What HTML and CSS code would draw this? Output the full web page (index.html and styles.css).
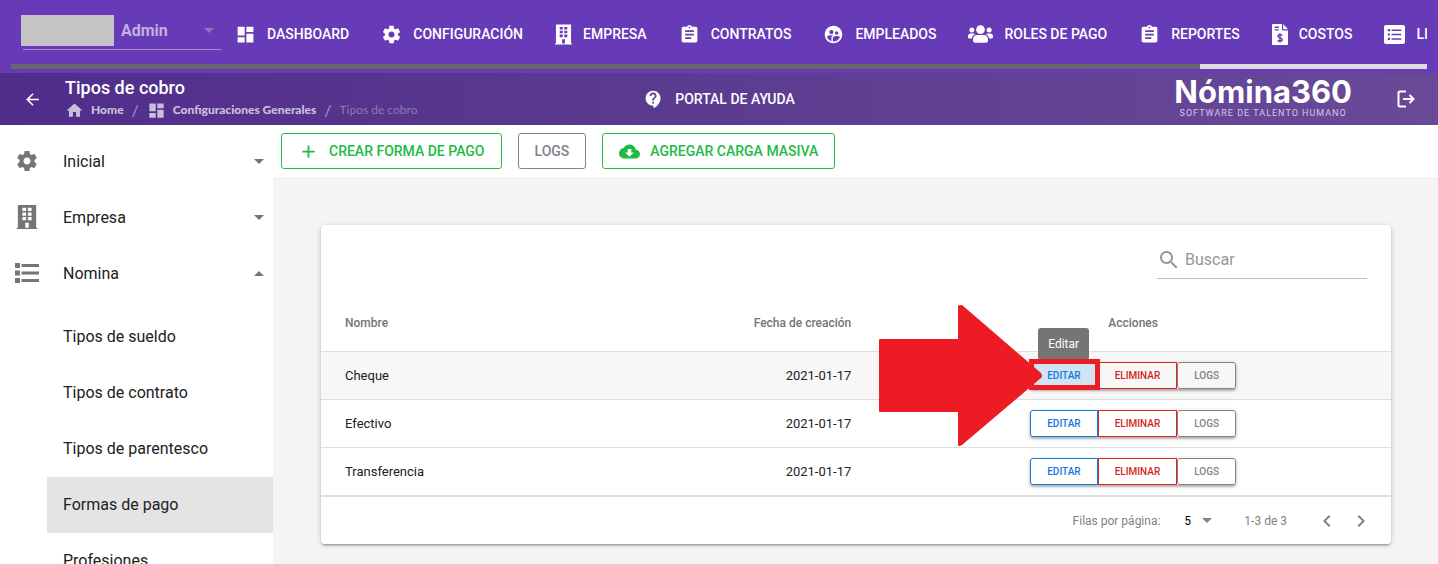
FILE: index.html
```html
<!DOCTYPE html>
<html lang="es">
<head>
  <meta charset="UTF-8" />
  <meta name="viewport" content="width=device-width, initial-scale=1" />
  <title>Nómina360 - Tipos de cobro</title>
  <link rel="stylesheet" href="styles.css">
</head>
<body>

  <!-- iconos compartidos -->
  <svg class="sprite" aria-hidden="true">
    <symbol id="i-dashboard" viewBox="0 0 24 24"><path d="M3 13h8V3H3v10zm0 8h8v-6H3v6zm10 0h8V11h-8v10zm0-18v6h8V3h-8z"/></symbol>
    <symbol id="i-gear" viewBox="0 0 24 24"><path d="M19.43 12.98c.04-.32.07-.64.07-.98s-.03-.66-.07-.98l2.11-1.65c.19-.15.24-.42.12-.64l-2-3.46c-.12-.22-.39-.3-.61-.22l-2.49 1c-.52-.4-1.08-.73-1.69-.98l-.38-2.65C14.46 2.18 14.25 2 14 2h-4c-.25 0-.46.18-.49.42l-.38 2.65c-.61.25-1.17.59-1.69.98l-2.49-1c-.23-.09-.49 0-.61.22l-2 3.46c-.13.22-.07.49.12.64l2.11 1.65c-.04.32-.07.65-.07.98s.03.66.07.98l-2.11 1.65c-.19.15-.24.42-.12.64l2 3.46c.12.22.39.3.61.22l2.49-1c.52.4 1.08.73 1.69.98l.38 2.65c.03.24.24.42.49.42h4c.25 0 .46-.18.49-.42l.38-2.65c.61-.25 1.17-.59 1.69-.98l2.49 1c.23.09.49 0 .61-.22l2-3.46c.12-.22.07-.49-.12-.64l-2.11-1.65zM12 15.5c-1.93 0-3.5-1.57-3.5-3.5s1.57-3.5 3.5-3.5 3.5 1.57 3.5 3.5-1.57 3.5-3.5 3.5z"/></symbol>
    <symbol id="i-building" viewBox="0 0 18 21"><path fill-rule="evenodd" d="M1 0h16v20H18V21H0v-1H1zM5 2.500v2.800h3.200V2.500zM9.800 2.500v2.800H13V2.500zM5 6.500v2.800h3.200V6.500zM9.800 6.500v2.800H13V6.500zM5 10.500v2.800h3.200v-2.800zM9.800 10.500v2.800H13v-2.800zM7.500 15.600V20h3v-4.400z"/></symbol>
    <symbol id="i-clip" viewBox="0 0 24 24"><path d="M19 3h-4.180C14.400 1.840 13.300 1 12 1c-1.300 0-2.400.84-2.820 2H5c-1.100 0-2 .9-2 2v14c0 1.100.9 2 2 2h14c1.100 0 2-.9 2-2V5c0-1.100-.9-2-2-2zm-7 0c.55 0 1 .45 1 1s-.45 1-1 1-1-.45-1-1 .45-1 1-1zm2 14H7v-2h7v2zm3-4H7v-2h10v2zm0-4H7V7h10v2z"/></symbol>
    <symbol id="i-people" viewBox="0 0 24 24"><path d="M11.990 2c-5.520 0-10 4.480-10 10s4.480 10 10 10 10-4.480 10-10-4.480-10-10-10zm3.610 6.340c1.070 0 1.930.86 1.930 1.930 0 1.070-.86 1.930-1.930 1.930-1.070 0-1.930-.86-1.930-1.930-.01-1.070.86-1.930 1.930-1.930zm-6-1.580c1.300 0 2.360 1.060 2.360 2.360 0 1.300-1.060 2.360-2.360 2.360s-2.360-1.060-2.360-2.360c0-1.310 1.050-2.360 2.360-2.360zm0 9.130v3.750c-2.400-.75-4.300-2.600-5.140-4.960 1.050-1.120 3.670-1.690 5.140-1.690.53 0 1.200.08 1.900.22-1.640.87-1.900 2.020-1.900 2.680zM11.990 20c-.27 0-.53-.01-.79-.04v-4.070c0-1.420 2.940-2.130 4.400-2.130 1.070 0 2.920.39 3.840 1.150-1.170 2.970-4.060 5.090-7.450 5.090z"/></symbol>
    <symbol id="i-group" viewBox="0 0 26 20"><circle cx="13" cy="5.500" r="4.500"/><circle cx="4" cy="5.800" r="2.600"/><circle cx="22" cy="5.800" r="2.600"/><path d="M5.200 17v-1.500C5.200 12.900 7 11 9.400 11h7.200c2.400 0 4.200 1.900 4.200 4.500V17c0 1.100-.8 2-1.800 2H7c-1 0-1.800-.9-1.800-2zM0 12.300C0 10.500 1.200 9.500 2.600 9.500h2.600c.9 0 1.600.3 2.100.8-1.900 1-3 2.600-3.300 4.400H1.300c-.8 0-1.300-.5-1.300-1.200zM26 12.300c0-1.800-1.200-2.800-2.600-2.800h-2.600c-.9 0-1.600.3-2.100.8 1.900 1 3 2.600 3.300 4.400h2.700c.8 0 1.300-.5 1.300-1.200z"/></symbol>
    <symbol id="i-invoice" viewBox="0 0 16 21"><path fill-rule="evenodd" d="M1 0h9v5.500c0 .6.400 1 1 1h5V20c0 .6-.4 1-1 1H1c-.6 0-1-.4-1-1V1c0-.6.400-1 1-1zM11.200 0 16 5.200h-4.800zM2.700 2.600v1.300h4.200V2.600zM2.700 5.200v1.300h4.200V5.200z"/><path class="invoice-sign" d="M10.200 11.600c-.5-.7-1.300-1-2.200-1-1.200 0-2.100.6-2.100 1.600 0 2.100 4.400 1.100 4.400 3.300 0 1-1 1.700-2.300 1.700-1 0-1.800-.4-2.300-1M8 9.200v9.400"/></symbol>
    <symbol id="i-listbox" viewBox="0 0 21 19"><path fill-rule="evenodd" d="M2 0h17c1.100 0 2 .9 2 2v15c0 1.100-.9 2-2 2H2c-1.100 0-2-.9-2-2V2C0 .9.900 0 2 0zM3.800 4v2.200H6V4zM7.500 4.400v1.500h9.800V4.400zM3.800 8.400v2.200H6V8.400zM7.500 8.800v1.500h9.800V8.800zM3.800 12.800V15H6v-2.200zM7.500 13.200v1.500h9.800v-1.500z"/></symbol>
    <symbol id="i-list" viewBox="0 0 24 20"><path d="M0 0h5v5H0zM0 7.500h5v5H0zM0 15h5v5H0zM6.500 1H24v3H6.500zM6.500 8.500H24v3H6.500zM6.500 16H24v3H6.500z"/></symbol>
    <symbol id="i-home" viewBox="0 0 24 24"><path d="M10 20v-6h4v6h5v-8h3L12 3 2 12h3v8z"/></symbol>
    <symbol id="i-back" viewBox="0 0 24 24"><path d="M20 11H7.830l5.590-5.590L12 4l-8 8 8 8 1.410-1.410L7.830 13H20v-2z"/></symbol>
    <symbol id="i-help" viewBox="0 0 24 24"><path d="M11.500 2C6.810 2 3 5.810 3 10.500S6.810 19 11.500 19h.5v3c4.860-2.340 8-7 8-11.500C20 5.810 16.190 2 11.500 2zm1 14.500h-2v-2h2v2zm0-3.500h-2c0-3.250 3-3 3-5 0-1.100-.9-2-2-2s-2 .9-2 2h-2c0-2.210 1.790-4 4-4s4 1.790 4 4c0 2.500-3 2.750-3 5z"/></symbol>
    <symbol id="i-logout" viewBox="0 0 18 18"><path fill="none" stroke="currentColor" stroke-width="2" d="M9 1.500H3C2 1.500 1.500 2 1.500 3v12c0 1 .5 1.500 1.500 1.500h6M6 9h10M12.500 5l4 4-4 4"/></symbol>
    <symbol id="i-plus" viewBox="0 0 24 24"><path d="M19 13h-6v6h-2v-6H5v-2h6V5h2v6h6v2z"/></symbol>
    <symbol id="i-cloud" viewBox="0 0 24 24"><path d="M19.350 10.040C18.670 6.590 15.640 4 12 4 9.110 4 6.600 5.640 5.350 8.040 2.340 8.360 0 10.910 0 14c0 3.310 2.690 6 6 6h13c2.760 0 5-2.240 5-5 0-2.640-2.050-4.780-4.650-4.960zM17 13l-5 5-5-5h3V9h4v4h3z"/></symbol>
    <symbol id="i-search" viewBox="0 0 24 24"><path d="M15.500 14h-.79l-.28-.27C15.410 12.590 16 11.110 16 9.500 16 5.910 13.090 3 9.500 3S3 5.910 3 9.500 5.910 16 9.500 16c1.610 0 3.090-.59 4.230-1.570l.27.28v.79l5 4.990L20.490 19l-4.990-5zm-6 0C7.010 14 5 11.990 5 9.500S7.010 5 9.500 5 14 7.010 14 9.500 11.990 14 9.500 14z"/></symbol>
    <symbol id="i-caret" viewBox="0 0 10 5"><path d="M0 0h10L5 5z"/></symbol>
    <symbol id="i-prev" viewBox="0 0 24 24"><path d="M15.410 7.410L14 6l-6 6 6 6 1.410-1.410L10.830 12z"/></symbol>
    <symbol id="i-next" viewBox="0 0 24 24"><path d="M10 6L8.590 7.410 13.170 12l-4.580 4.590L10 18l6-6z"/></symbol>
  </svg>

  <header class="topbar">
    <div class="topbar-row">
      <div class="company">
        <span class="company-mask"></span>
        <select aria-label="Empresa">
          <option>Admin</option>
        </select>
        <svg class="caret"><use href="#i-caret"/></svg>
      </div>
      <nav class="main-nav">
        <a href="#"><svg class="icon"><use href="#i-dashboard"/></svg>DASHBOARD</a>
        <a href="#"><svg class="icon"><use href="#i-gear"/></svg>CONFIGURACIÓN</a>
        <a href="#"><svg class="icon-building"><use href="#i-building"/></svg>EMPRESA</a>
        <a href="#"><svg class="icon"><use href="#i-clip"/></svg>CONTRATOS</a>
        <a href="#"><svg class="icon"><use href="#i-people"/></svg>EMPLEADOS</a>
        <a href="#"><svg class="icon-group"><use href="#i-group"/></svg>ROLES DE PAGO</a>
        <a href="#"><svg class="icon"><use href="#i-clip"/></svg>REPORTES</a>
        <a href="#"><svg class="icon-invoice"><use href="#i-invoice"/></svg>COSTOS</a>
        <a href="#"><svg class="icon-listbox"><use href="#i-listbox"/></svg>LI</a>
      </nav>
    </div>
    <div class="nav-scroll"><div class="nav-scroll-thumb"></div></div>
  </header>

  <div class="subheader">
    <div class="sub-left">
      <button class="icon-btn" aria-label="Volver"><svg class="icon-back"><use href="#i-back"/></svg></button>
      <div>
        <h1>Tipos de cobro</h1>
        <nav class="crumbs" aria-label="Ruta">
          <a href="#"><svg class="crumb-icon"><use href="#i-home"/></svg>Home</a>
          <span class="sep">/</span>
          <a href="#"><svg class="crumb-icon"><use href="#i-dashboard"/></svg>Configuraciones Generales</a>
          <span class="sep">/</span>
          <span class="current">Tipos de cobro</span>
        </nav>
      </div>
    </div>
    <a class="help" href="#"><svg class="icon"><use href="#i-help"/></svg>PORTAL DE AYUDA</a>
    <div class="sub-right">
      <div class="brand">
        <span class="brand-name">Nómina360</span>
        <span class="brand-tag">SOFTWARE DE TALENTO HUMANO</span>
      </div>
      <button class="icon-btn" aria-label="Salir"><svg class="icon-logout"><use href="#i-logout"/></svg></button>
    </div>
  </div>

  <div class="layout">
    <aside class="sidebar">
      <a class="side-item" href="#"><span class="side-icon"><svg class="side-gear"><use href="#i-gear"/></svg></span>Inicial<svg class="caret"><use href="#i-caret"/></svg></a>
      <a class="side-item" href="#"><span class="side-icon"><svg class="side-building"><use href="#i-building"/></svg></span>Empresa<svg class="caret"><use href="#i-caret"/></svg></a>
      <a class="side-item" href="#"><span class="side-icon"><svg class="side-list"><use href="#i-list"/></svg></span>Nomina<svg class="caret up"><use href="#i-caret"/></svg></a>
      <div class="submenu">
        <a href="#">Tipos de sueldo</a>
        <a href="#">Tipos de contrato</a>
        <a href="#">Tipos de parentesco</a>
        <a href="#" class="active">Formas de pago</a>
        <a href="#">Profesiones</a>
      </div>
    </aside>

    <main>
      <div class="toolbar">
        <button class="btn green"><svg class="icon"><use href="#i-plus"/></svg>CREAR FORMA DE PAGO</button>
        <button class="btn gray">LOGS</button>
        <button class="btn green"><svg class="icon"><use href="#i-cloud"/></svg>AGREGAR CARGA MASIVA</button>
      </div>

      <section class="card">
        <div class="card-top">
          <label class="search">
            <svg><use href="#i-search"/></svg>
            <input type="text" placeholder="Buscar" aria-label="Buscar">
          </label>
        </div>

        <table>
          <thead>
            <tr><th class="name">Nombre</th><th class="date">Fecha de creación</th><th class="actions">Acciones</th></tr>
          </thead>
          <tbody>
            <tr class="hover">
              <td class="name">Cheque</td>
              <td class="date">2021-01-17</td>
              <td class="actions">
                <div class="group">
                  <button class="edit">EDITAR</button><button class="delete">ELIMINAR</button><button class="logs">LOGS</button>
                  <span class="tooltip">Editar</span>
                  <span class="marker"></span>
                  <svg class="arrow" viewBox="0 0 164 141"><path d="M1 34h78V1q0-1 4-1l79 68q2 3 0 5l-79 67q-4 2-4 0v-33H1q-1 0-1-1V35q0-1 1-1z"/></svg>
                </div>
              </td>
            </tr>
            <tr>
              <td class="name">Efectivo</td>
              <td class="date">2021-01-17</td>
              <td class="actions">
                <div class="group">
                  <button class="edit">EDITAR</button><button class="delete">ELIMINAR</button><button class="logs">LOGS</button>
                </div>
              </td>
            </tr>
            <tr>
              <td class="name">Transferencia</td>
              <td class="date">2021-01-17</td>
              <td class="actions">
                <div class="group">
                  <button class="edit">EDITAR</button><button class="delete">ELIMINAR</button><button class="logs">LOGS</button>
                </div>
              </td>
            </tr>
          </tbody>
        </table>

        <div class="pager">
          <label for="filas">Filas por página:</label>
          <div class="rows">
            <select id="filas">
              <option>5</option>
              <option>10</option>
              <option>25</option>
            </select>
            <svg class="caret"><use href="#i-caret"/></svg>
          </div>
          <span class="range">1-3 de 3</span>
          <button aria-label="Anterior"><svg><use href="#i-prev"/></svg></button>
          <button aria-label="Siguiente"><svg><use href="#i-next"/></svg></button>
        </div>
      </section>
    </main>
  </div>

</body>
</html>
```

FILE: styles.css
```css
* {
  box-sizing: border-box;
}
body {
  margin: 0;
  height: 100vh;
  overflow: hidden;
  display: flex;
  flex-direction: column;
  background: #f4f4f4;
  font-family: Roboto, "Liberation Sans", sans-serif;
  color: #212121;
}
a {
  color: inherit;
  text-decoration: none;
}
button,
select,
input {
  font-family: inherit;
  color: inherit;
  background: none;
  border: 0;
  padding: 0;
  margin: 0;
}
select {
  appearance: none;
}
button {
  cursor: pointer;
}
svg {
  fill: currentColor;
  flex: none;
  display: block;
}
.sprite {
  position: absolute;
  width: 0;
  height: 0;
}
.icon {
  width: 21px;
  height: 21px;
}
.caret {
  width: 10px;
  height: 5px;
}
.caret.up {
  transform: rotate(180deg);
}

/* barra superior */
.topbar {
  flex: none;
  height: 73px;
  padding: 0 11px;
  background: #673ab7;
  color: white;
}
.topbar-row {
  height: 64px;
  display: flex;
  align-items: center;
  overflow: hidden;
}
.company {
  position: relative;
  flex: none;
  display: flex;
  align-items: center;
  width: 198px;
  height: 36px;
  margin: 0 14px 0 12px;
  padding: 0 7px 2px 0;
  color: #c3b0e2;
  border-bottom: 1px solid #a58bd3;
}
.company select {
  flex: 1;
  padding-left: 98px;
  font-size: 16px;
  font-weight: 700;
}
.company .caret {
  color: #8f75b9;
}
.company-mask {
  position: absolute;
  left: -2px;
  top: 1px;
  width: 93px;
  height: 31px;
  background: #c4c4c4;
}
.main-nav {
  display: flex;
  align-items: center;
  gap: 32px;
  padding-top: 4px;
}
.main-nav a,
.help {
  display: flex;
  align-items: center;
  gap: 11px;
  font-size: 14px;
  font-weight: 500;
  white-space: nowrap;
}
.icon-building {
  width: 17px;
  height: 21px;
}
.icon-group {
  width: 25px;
  height: 20px;
}
.icon-invoice {
  width: 16px;
  height: 21px;
}
.invoice-sign {
  fill: none;
  stroke: #673ab7;
  stroke-width: 1.4;
}
.icon-listbox {
  width: 21px;
  height: 19px;
}
.nav-scroll {
  height: 5px;
  background: #dcdcdc;
}
.nav-scroll-thumb {
  width: 84%;
  height: 5px;
  background: #686868;
}

/* cabecera de la página */
.subheader {
  flex: none;
  height: 52px;
  display: grid;
  grid-template-columns: 1fr auto 1fr;
  align-items: center;
  background: linear-gradient(90deg, #502d8b, #5c3c90 50%, #694998);
  color: white;
}
.sub-left {
  display: flex;
  align-items: center;
  gap: 23px;
  padding-left: 23px;
}
.icon-back {
  width: 19px;
  height: 19px;
}
h1 {
  margin: 0;
  font-size: 18px;
  line-height: 22px;
  font-weight: 500;
}
.crumbs {
  display: flex;
  align-items: center;
  gap: 8px;
  font-family: Lato, sans-serif;
  font-size: 12px;
  line-height: 22px;
  font-weight: 900;
  color: #cbc0dc;
}
.crumbs a {
  display: flex;
  align-items: center;
  gap: 7px;
}
.crumb-icon {
  width: 19px;
  height: 19px;
}
.crumbs .sep {
  font-size: 16px;
  font-weight: 400;
  color: #a796c5;
}
.crumbs .current {
  font-weight: 400;
  color: #8d78ae;
}
.sub-right {
  display: flex;
  align-items: center;
  justify-content: flex-end;
  gap: 45px;
  padding-right: 23px;
}
.brand {
  display: flex;
  flex-direction: column;
  align-items: center;
  padding-bottom: 4px;
}
.brand-name {
  font-family: Inter, sans-serif;
  font-size: 31px;
  line-height: 32px;
  font-weight: 700;
}
.brand-tag {
  font-size: 9px;
  line-height: 10px;
  letter-spacing: 1px;
  color: #d3c9e2;
}
.icon-logout {
  width: 18px;
  height: 18px;
}

/* menú lateral */
.layout {
  flex: 1;
  min-height: 0;
  display: flex;
}
.sidebar {
  flex: none;
  width: 273px;
  padding-top: 8px;
  background: white;
  overflow: hidden;
  font-size: 16px;
  color: #212121;
}
.side-item {
  display: flex;
  align-items: center;
  height: 56px;
  padding-right: 9px;
}
.side-icon {
  width: 63px;
  padding-left: 15px;
  color: #757575;
}
.side-item .caret {
  margin-left: auto;
  color: #757575;
}
.side-gear,
.side-building,
.side-list {
  width: 24px;
  height: 24px;
}
.side-list {
  height: 20px;
}
.submenu {
  padding: 8px 0 8px 47px;
}
.submenu a {
  display: flex;
  align-items: center;
  height: 56px;
  padding: 0 16px 2px;
}
.submenu .active {
  background: #e4e4e4;
}

/* contenido */
main {
  flex: 1;
  min-width: 0;
}
.toolbar {
  display: flex;
  gap: 16px;
  padding: 8px;
  background: white;
}
.btn {
  display: flex;
  align-items: center;
  gap: 10px;
  height: 36px;
  padding: 0 16px;
  border: 1px solid;
  border-radius: 3px;
  font-size: 14px;
  font-weight: 500;
}
.green {
  color: #21ba45;
}
.gray {
  color: #86808c;
}
.card {
  margin: 48px 47px 48px 48px;
  background: white;
  border-radius: 4px;
  box-shadow: 0 1px 5px rgba(0,0,0,.2), 0 2px 2px rgba(0,0,0,.14), 0 3px 1px -2px rgba(0,0,0,.12);
}
.card-top {
  display: flex;
  justify-content: flex-end;
  height: 70px;
  padding: 16px 24px;
}
.search {
  display: flex;
  align-items: center;
  gap: 4px;
  width: 210px;
  height: 38px;
  border-bottom: 1px solid #bdbdbd;
  color: #979797;
}
.search svg {
  width: 24px;
  height: 24px;
}
.search input {
  min-width: 0;
  flex: 1;
  font-size: 16px;
  outline: 0;
}
.search input::placeholder {
  color: #979797;
}
table {
  width: 100%;
  table-layout: fixed;
  border-collapse: separate;
  border-spacing: 0;
  font-size: 13px;
}
th,
td {
  height: 48px;
  padding: 0 24px;
  border-bottom: 1px solid #dedede;
}
th {
  height: 57px;
  font-size: 12px;
  font-weight: 500;
  color: #757575;
}
tbody tr:last-child td {
  height: 49px;
  border-bottom-width: 2px;
}
.hover td {
  background: #f7f7f7;
}
.name {
  text-align: left;
}
.date {
  text-align: right;
}
.actions {
  width: 48.2%;
  text-align: center;
}
.group {
  position: relative;
  display: inline-flex;
  vertical-align: middle;
  border-radius: 3px;
  box-shadow: 0 1px 4px rgba(0,0,0,.2), 0 2px 2px rgba(0,0,0,.2);
}
.group button {
  height: 27px;
  padding: 0 16px;
  border: 1px solid;
  font-size: 10px;
  font-weight: 500;
}
.group .edit {
  color: #1279e0;
  border-radius: 3px 0 0 3px;
}
.group .delete {
  color: #d82424;
}
.group .logs {
  color: #86808c;
  border-radius: 3px;
}
.hover .edit {
  background: #d2e3f4;
}
.tooltip {
  position: absolute;
  left: 8px;
  bottom: 29px;
  padding: 8px 10px;
  border-radius: 3px;
  background: #757575;
  color: white;
  font-size: 12px;
  line-height: 16px;
}
.marker {
  position: absolute;
  left: -1px;
  top: -3px;
  width: 71px;
  height: 31px;
  border: 5px solid #ed1c24;
}
.arrow {
  position: absolute;
  left: -151px;
  top: -57px;
  width: 164px;
  height: 141px;
  color: #ed1c24;
}
.pager {
  display: flex;
  align-items: center;
  justify-content: flex-end;
  height: 47px;
  padding-right: 18px;
  font-size: 12px;
  color: #828282;
}
.rows {
  display: flex;
  align-items: center;
  gap: 4px;
  margin: 0 32px 0 24px;
}
.rows select {
  width: 14px;
  font-size: 12px;
  color: black;
}
.range {
  margin-right: 28px;
}
.pager button {
  width: 24px;
  height: 24px;
}
.pager button + button {
  margin-left: 10px;
}
.pager button svg {
  width: 24px;
  height: 24px;
}
```
